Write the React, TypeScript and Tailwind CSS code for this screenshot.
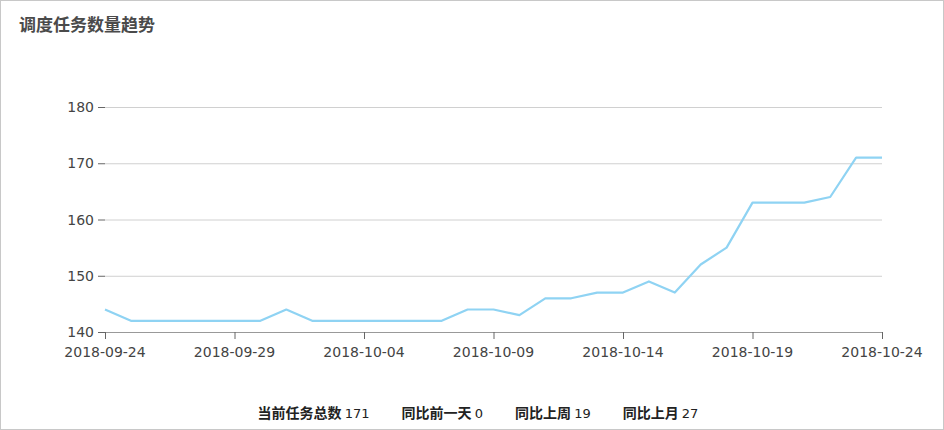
const vals=[144,142,142,142,142,142,142,144,142,142,142,142,142,142,144,144,143,146,146,147,147,149,147,152,155,163,163,163,164,171,171];
const X=(i:number)=>104+i*(777/30);
const Y=(v:number)=>332-(v-140)*5.625;
const labels=["2018-09-24","2018-09-29","2018-10-04","2018-10-09","2018-10-14","2018-10-19","2018-10-24"];
export default function App(){
  const pts=vals.map((v,i)=>`${X(i).toFixed(1)},${Y(v).toFixed(1)}`).join(" ");
  return (
  <div className="w-[944px] h-[430px] border border-[#c8c8c8] bg-white flex flex-col" style={{fontFamily:'"Microsoft YaHei","Noto Sans CJK SC",sans-serif'}}>
    <div className="px-[18px] pt-[10px] text-[17px] font-bold text-[#4a4a4a] leading-[26px]">调度任务数量趋势</div>
    <svg width="942" height="340" viewBox="0 37 942 340" className="block">
      {[140,150,160,170,180].map(v=>(
        <g key={v}>
          <line x1="104" x2="881" y1={Y(v)+0.5} y2={Y(v)+0.5} stroke={v===140?"#999":"#d0d0d0"} />
          <line x1="97" x2="104" y1={Y(v)+0.5} y2={Y(v)+0.5} stroke="#666"/>
          <text x="93" y={Y(v)+5} textAnchor="end" fontSize="14" fill="#444" fontFamily="DejaVu Sans, sans-serif">{v}</text>
        </g>
      ))}
      {labels.map((l,k)=>(
        <g key={l}>
          <line x1={X(k*5)+0.5} x2={X(k*5)+0.5} y1="332" y2="339" stroke="#666"/>
          <text x={X(k*5)} y="357" textAnchor="middle" fontSize="14" fill="#444" fontFamily="DejaVu Sans, sans-serif">{l}</text>
        </g>
      ))}
      <polyline points={pts} fill="none" stroke="#8fd3f3" strokeWidth="2.2" strokeLinejoin="round"/>
    </svg>
    <div className="mt-auto pb-[6px] flex justify-center gap-[32px] text-[14px] text-[#222] ml-[12px]">
      <span><b>当前任务总数</b> <span style={{fontFamily:'"DejaVu Sans",sans-serif'}} className="text-[13px]">171</span></span>
      <span><b>同比前一天</b> <span style={{fontFamily:'"DejaVu Sans",sans-serif'}} className="text-[13px]">0</span></span>
      <span><b>同比上周</b> <span style={{fontFamily:'"DejaVu Sans",sans-serif'}} className="text-[13px]">19</span></span>
      <span><b>同比上月</b> <span style={{fontFamily:'"DejaVu Sans",sans-serif'}} className="text-[13px]">27</span></span>
    </div>
  </div>);
}
